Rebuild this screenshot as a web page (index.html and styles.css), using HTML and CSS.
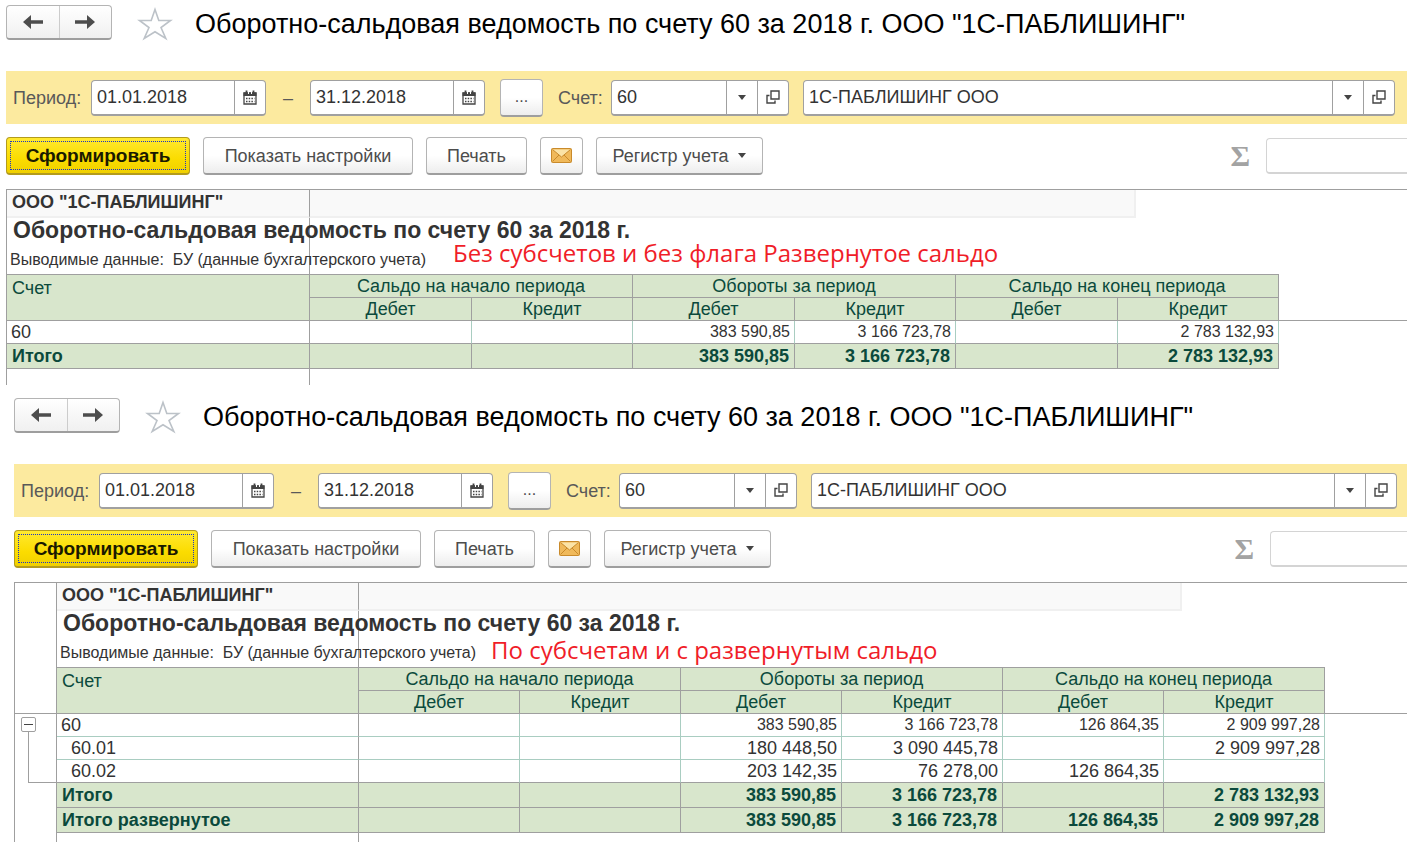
FILE: index.html
```html
<!DOCTYPE html>
<html lang="ru">
<head>
  <meta charset="UTF-8">
  <meta name="viewport" content="width=device-width, initial-scale=1.0">
  <title>Оборотно-сальдовая ведомость по счету 60</title>
  <link rel="stylesheet" href="styles.css">
</head>
<body>
  <!-- Общие иконки -->
  <svg class="sprite" aria-hidden="true">
    <symbol id="i-left" viewBox="0 0 22 16">
      <path d="M1 8L9 1V6.200H21V9.800H9V15Z" fill="#4d4d4d"/>
    </symbol>
    <symbol id="i-right" viewBox="0 0 22 16">
      <path d="M21 8L13 1V6.200H1V9.800H13V15Z" fill="#4d4d4d"/>
    </symbol>
    <symbol id="i-star" viewBox="0 0 36 34">
      <path d="M18 2.500L21.800 13.500H33.500L24 20.500L28.800 31.500L18 24.700L7.200 31.500L12 20.500L2.500 13.500H14.200Z" fill="#fff" stroke="#bcc2c8" stroke-width="1.600"/>
    </symbol>
    <symbol id="i-cal" viewBox="0 0 14 15">
      <path d="M1 3H13V14H1Z" fill="#fff" stroke="#444" stroke-width="1.300"/>
      <path d="M0.500 2.500H13.500V6H0.500Z" fill="#444"/>
      <path d="M3.500 0.500V4M10.500 0.500V4" stroke="#444" stroke-width="1.800"/>
      <path d="M5.500 2V4M8.500 2V4" stroke="#fff" stroke-width="1"/>
      <path d="M3 8.500H11.500M3 11.500H11.500" stroke="#444" stroke-width="1.500" stroke-dasharray="1.500 1.200"/>
    </symbol>
    <symbol id="i-open" viewBox="0 0 14 14">
      <path d="M5 1H13V9H5Z" fill="none" stroke="#444" stroke-width="1.400"/>
      <path d="M3.500 5.500H1V13H9V10.500" fill="none" stroke="#444" stroke-width="1.400"/>
    </symbol>
    <symbol id="i-mail" viewBox="0 0 21 15">
      <rect x="0.500" y="0.500" width="20" height="14" rx="1" fill="#f0b95a" stroke="#c98a2b"/>
      <path d="M1.500 1.500H19.500L10.500 9Z" fill="#fbe3a6"/>
      <path d="M1.500 1.500L10.500 9L19.500 1.500M1.500 13.500L8 7M19.500 13.500L13 7" fill="none" stroke="#c98a2b" stroke-width="1"/>
    </symbol>
  </svg>

  <section class="panel">
    <header class="panel-head">
      <div class="nav">
        <button type="button" aria-label="Назад"><svg width="22" height="16"><use href="#i-left"/></svg></button>
        <button type="button" aria-label="Вперед"><svg width="22" height="16"><use href="#i-right"/></svg></button>
      </div>
      <svg class="star" width="36" height="34"><use href="#i-star"/></svg>
      <h1>Оборотно-сальдовая ведомость по счету 60 за 2018 г. ООО "1С-ПАБЛИШИНГ"</h1>
    </header>

    <div class="filter">
      <label class="label-period" for="from1">Период:</label>
      <div class="field field-date">
        <input id="from1" type="text" value="01.01.2018">
        <button type="button" aria-label="Календарь"><svg width="14" height="15"><use href="#i-cal"/></svg></button>
      </div>
      <label class="dash" for="to1">–</label>
      <div class="field field-date">
        <input id="to1" type="text" value="31.12.2018">
        <button type="button" aria-label="Календарь"><svg width="14" height="15"><use href="#i-cal"/></svg></button>
      </div>
      <button type="button" class="btn btn-dots">...</button>
      <label class="label-account" for="acc1">Счет:</label>
      <div class="field field-account">
        <input id="acc1" type="text" value="60">
        <button type="button" aria-label="Выбрать"><span class="caret"></span></button>
        <button type="button" aria-label="Открыть"><svg width="14" height="14"><use href="#i-open"/></svg></button>
      </div>
      <div class="field field-org">
        <input type="text" value="1С-ПАБЛИШИНГ ООО" aria-label="Организация">
        <button type="button" aria-label="Выбрать"><span class="caret"></span></button>
        <button type="button" aria-label="Открыть"><svg width="14" height="14"><use href="#i-open"/></svg></button>
      </div>
    </div>

    <div class="toolbar">
      <button type="button" class="btn btn-main"><span>Сформировать</span></button>
      <button type="button" class="btn btn-settings">Показать настройки</button>
      <button type="button" class="btn btn-print">Печать</button>
      <button type="button" class="btn btn-mail" aria-label="Отправить по почте"><svg width="21" height="15"><use href="#i-mail"/></svg></button>
      <button type="button" class="btn btn-register">Регистр учета <span class="caret"></span></button>
      <label class="sigma" for="sum1">Σ</label>
      <input class="sum" id="sum1" type="text">
    </div>

    <div class="sheet-wrap">
      <table class="sheet">
        <colgroup>
          <col class="c-account"><col class="c-debit"><col class="c-credit"><col class="c-debit"><col class="c-credit"><col class="c-debit"><col class="c-credit"><col>
        </colgroup>
        <thead>
          <tr class="r-org"><td class="edge">ООО "1С-ПАБЛИШИНГ"</td><td colspan="7"><div class="org-fill"></div></td></tr>
          <tr class="r-title"><td class="edge">Оборотно-сальдовая ведомость по счету 60 за 2018 г.</td><td colspan="7"></td></tr>
          <tr class="r-data"><td class="edge line">Выводимые данные:&nbsp; БУ (данные бухгалтерского учета)</td><td class="line" colspan="6"></td><td></td></tr>
          <tr class="r-head"><th class="edge" rowspan="2">Счет</th><th colspan="2">Сальдо на начало периода</th><th colspan="2">Обороты за период</th><th colspan="2">Сальдо на конец периода</th><td></td></tr>
          <tr class="r-head"><th>Дебет</th><th>Кредит</th><th>Дебет</th><th>Кредит</th><th>Дебет</th><th>Кредит</th><td class="line"></td></tr>
        </thead>
        <tbody>
          <tr class="r-item r-small r-last"><td class="edge">60</td><td></td><td></td><td>383 590,85</td><td>3 166 723,78</td><td></td><td>2 783 132,93</td></tr>
          <tr class="r-total"><td class="edge">Итого</td><td></td><td></td><td>383 590,85</td><td>3 166 723,78</td><td></td><td>2 783 132,93</td></tr>
          <tr class="r-rest"><td class="edge"></td><td colspan="7"></td></tr>
        </tbody>
      </table>
      <p class="note">Без субсчетов и без флага Развернутое сальдо</p>
    </div>
  </section>

  <section class="panel panel-detailed">
    <header class="panel-head">
      <div class="nav">
        <button type="button" aria-label="Назад"><svg width="22" height="16"><use href="#i-left"/></svg></button>
        <button type="button" aria-label="Вперед"><svg width="22" height="16"><use href="#i-right"/></svg></button>
      </div>
      <svg class="star" width="36" height="34"><use href="#i-star"/></svg>
      <h1>Оборотно-сальдовая ведомость по счету 60 за 2018 г. ООО "1С-ПАБЛИШИНГ"</h1>
    </header>

    <div class="filter">
      <label class="label-period" for="from2">Период:</label>
      <div class="field field-date">
        <input id="from2" type="text" value="01.01.2018">
        <button type="button" aria-label="Календарь"><svg width="14" height="15"><use href="#i-cal"/></svg></button>
      </div>
      <label class="dash" for="to2">–</label>
      <div class="field field-date">
        <input id="to2" type="text" value="31.12.2018">
        <button type="button" aria-label="Календарь"><svg width="14" height="15"><use href="#i-cal"/></svg></button>
      </div>
      <button type="button" class="btn btn-dots">...</button>
      <label class="label-account" for="acc2">Счет:</label>
      <div class="field field-account">
        <input id="acc2" type="text" value="60">
        <button type="button" aria-label="Выбрать"><span class="caret"></span></button>
        <button type="button" aria-label="Открыть"><svg width="14" height="14"><use href="#i-open"/></svg></button>
      </div>
      <div class="field field-org">
        <input type="text" value="1С-ПАБЛИШИНГ ООО" aria-label="Организация">
        <button type="button" aria-label="Выбрать"><span class="caret"></span></button>
        <button type="button" aria-label="Открыть"><svg width="14" height="14"><use href="#i-open"/></svg></button>
      </div>
    </div>

    <div class="toolbar">
      <button type="button" class="btn btn-main"><span>Сформировать</span></button>
      <button type="button" class="btn btn-settings">Показать настройки</button>
      <button type="button" class="btn btn-print">Печать</button>
      <button type="button" class="btn btn-mail" aria-label="Отправить по почте"><svg width="21" height="15"><use href="#i-mail"/></svg></button>
      <button type="button" class="btn btn-register">Регистр учета <span class="caret"></span></button>
      <label class="sigma" for="sum2">Σ</label>
      <input class="sum" id="sum2" type="text">
    </div>

    <div class="sheet-wrap">
      <table class="sheet">
        <colgroup>
          <col class="c-outline"><col class="c-account"><col class="c-debit"><col class="c-credit"><col class="c-debit"><col class="c-credit"><col class="c-debit"><col class="c-credit"><col>
        </colgroup>
        <thead>
          <tr class="r-org"><td class="outline line" rowspan="5"></td><td class="edge">ООО "1С-ПАБЛИШИНГ"</td><td colspan="7"><div class="org-fill"></div></td></tr>
          <tr class="r-title"><td class="edge">Оборотно-сальдовая ведомость по счету 60 за 2018 г.</td><td colspan="7"></td></tr>
          <tr class="r-data"><td class="edge line">Выводимые данные:&nbsp; БУ (данные бухгалтерского учета)</td><td class="line" colspan="6"></td><td></td></tr>
          <tr class="r-head"><th class="edge" rowspan="2">Счет</th><th colspan="2">Сальдо на начало периода</th><th colspan="2">Обороты за период</th><th colspan="2">Сальдо на конец периода</th><td></td></tr>
          <tr class="r-head"><th>Дебет</th><th>Кредит</th><th>Дебет</th><th>Кредит</th><th>Дебет</th><th>Кредит</th><td class="line"></td></tr>
        </thead>
        <tbody>
          <tr class="r-item r-small">
            <td class="outline" rowspan="3">
              <div class="group">
                <button type="button" class="collapse" aria-label="Свернуть"></button>
                <div class="bracket"></div>
              </div>
            </td>
            <td class="edge">60</td><td></td><td></td><td>383 590,85</td><td>3 166 723,78</td><td>126 864,35</td><td>2 909 997,28</td>
          </tr>
          <tr class="r-item"><td class="edge sub">60.01</td><td></td><td></td><td>180 448,50</td><td>3 090 445,78</td><td></td><td>2 909 997,28</td></tr>
          <tr class="r-item r-last"><td class="edge sub">60.02</td><td></td><td></td><td>203 142,35</td><td>76 278,00</td><td>126 864,35</td><td></td></tr>
          <tr class="r-total"><td class="outline" rowspan="3"></td><td class="edge">Итого</td><td></td><td></td><td>383 590,85</td><td>3 166 723,78</td><td></td><td>2 783 132,93</td></tr>
          <tr class="r-total"><td class="edge">Итого развернутое</td><td></td><td></td><td>383 590,85</td><td>3 166 723,78</td><td>126 864,35</td><td>2 909 997,28</td></tr>
          <tr class="r-rest"><td class="edge"></td><td colspan="7"></td></tr>
        </tbody>
      </table>
      <p class="note">По субсчетам и с развернутым сальдо</p>
    </div>
  </section>
</body>
</html>
```
FILE: styles.css
```css
* {
  box-sizing: border-box;
}

body {
  margin: 0;
  background: #fff;
  color: #333;
  font-family: "Liberation Sans", Arial, sans-serif;
  font-size: 18px;
  line-height: 22px;
  overflow-x: hidden;
}

button,
input {
  font: inherit;
  color: inherit;
}

.sprite {
  display: none;
}

.panel {
  padding: 5px 0 0 6px;
}

.panel-detailed {
  padding: 13px 0 0 14px;
}

/* Заголовок */
.panel-head {
  display: flex;
  align-items: center;
  height: 35px;
  margin-bottom: 31px;
}

.nav {
  display: flex;
  width: 106px;
  height: 35px;
  border: 1px solid #b4b4b4;
  border-bottom: 2px solid #9e9e9e;
  border-radius: 4px;
  background: linear-gradient(#fff, #f0f0f0);
}

.nav button {
  flex: 1;
  display: flex;
  align-items: center;
  justify-content: center;
  padding: 0;
  border: none;
  background: none;
}

.nav button + button {
  border-left: 1px solid #ccc;
}

.star {
  margin: 2px 22px 0 25px;
}

h1 {
  margin: 0;
  padding-top: 2px;
  color: #000;
  font-size: 27px;
  font-weight: normal;
  line-height: 34px;
  white-space: nowrap;
}

/* Отбор */
.filter {
  display: flex;
  align-items: center;
  height: 53px;
  padding: 0 12px 0 7px;
  background: #fcea9f;
  color: #595959;
}

.panel-detailed .filter {
  padding-right: 10px;
}

.label-period {
  width: 78px;
}

.label-account {
  width: 53px;
  margin-left: 15px;
}

.dash {
  width: 44px;
  text-align: center;
}

.field {
  display: flex;
  height: 36px;
  border: 1px solid #a0a0a0;
  border-bottom-width: 2px;
  border-radius: 4px;
  background: #fff;
  color: #333;
  overflow: hidden;
}

.field input {
  flex: 1;
  min-width: 0;
  padding: 0 5px;
  border: none;
  outline: none;
  background: none;
}

.field button {
  display: flex;
  align-items: center;
  justify-content: center;
  width: 31px;
  padding: 0;
  border: none;
  border-left: 1px solid #a0a0a0;
  background: none;
}

.field-date {
  width: 175px;
}

.field-account {
  width: 178px;
}

.field-org {
  flex: 1;
  margin-left: 14px;
}

.caret {
  border: 4px solid transparent;
  border-top: 5px solid #444;
  border-bottom: none;
}

/* Кнопки */
.btn {
  display: flex;
  align-items: center;
  justify-content: center;
  height: 38px;
  padding: 0;
  border: 1px solid #b4b4b4;
  border-bottom: 2px solid #9e9e9e;
  border-radius: 4px;
  background: linear-gradient(#fff 50%, #ededed);
  color: #4d4d4d;
  white-space: nowrap;
}

.btn-dots {
  width: 43px;
  margin-left: 15px;
  font-size: 16px;
}

.toolbar {
  display: flex;
  align-items: center;
  gap: 13px;
  margin: 13px 0 14px;
}

.btn-main {
  width: 184px;
  padding: 3px;
  border-color: #b39b1c;
  background: linear-gradient(#ffe930, #fbdc00 60%, #f0d000);
  color: #1a1a00;
  font-size: 19px;
  font-weight: bold;
}

.btn-main span {
  display: flex;
  align-items: center;
  justify-content: center;
  width: 100%;
  height: 29px;
  border: 1px dotted #1b34c8;
}

.btn-settings {
  width: 210px;
}

.btn-print {
  width: 101px;
}

.btn-mail {
  width: 43px;
}

.btn-register {
  width: 167px;
  gap: 10px;
}

.sigma {
  margin-left: auto;
  color: #a3a3a3;
  font-family: "Liberation Serif", serif;
  font-size: 30px;
  font-weight: bold;
}

.sum {
  width: 141px;
  height: 36px;
  margin-left: 3px;
  border: 1px solid #d4d4d4;
  border-right: none;
  border-bottom-width: 2px;
  border-radius: 4px 0 0 4px;
  background: #fff;
}

.panel-detailed .sum {
  width: 137px;
}

/* Табличный документ */
.sheet-wrap {
  position: relative;
}

.sheet {
  width: 100%;
  table-layout: fixed;
  border-collapse: separate;
  border-spacing: 0;
  border-top: 1px solid #9f9f9f;
  border-left: 1px solid #9f9f9f;
}

.c-account {
  width: 303px;
}

.c-debit {
  width: 162px;
}

.c-credit {
  width: 161px;
}

.panel-detailed .c-account {
  width: 302px;
}

.panel-detailed .c-debit {
  width: 161px;
}

.c-outline {
  width: 42px;
}

.sheet td,
.sheet th {
  padding: 0 4px;
  line-height: 20px;
  white-space: nowrap;
}

.sheet .edge,
.sheet .outline {
  border-right: 1px solid #9f9f9f;
  text-align: left;
}

.sheet .line {
  border-bottom: 1px solid #9f9f9f;
}

.sheet .outline {
  padding: 0;
  vertical-align: top;
}

.r-org {
  height: 28px;
}

.sheet .r-org td {
  padding: 0;
  vertical-align: top;
}

.sheet .r-org .edge {
  padding: 2px 5px;
  border-bottom: 2px solid #f0f0f0;
  background: #f9f9f9;
  font-weight: bold;
}

.org-fill {
  width: 826px;
  height: 28px;
  border: solid #f0f0f0;
  border-width: 0 2px 2px 0;
  background: #f9f9f9;
}

.panel-detailed .org-fill {
  width: 823px;
}

.r-title {
  height: 28px;
}

.sheet .r-title .edge {
  padding: 0 6px;
  font-size: 23px;
  font-weight: bold;
  line-height: 24px;
  vertical-align: top;
}

.r-data {
  height: 29px;
}

.sheet .r-data .edge {
  padding: 0 3px;
  font-size: 16px;
}

.r-head {
  height: 23px;
}

.r-head th {
  border: solid #9f9f9f;
  border-width: 0 1px 1px 0;
  background: #d8e6cc;
  color: #0b4a3c;
  font-weight: normal;
}

.sheet .r-head .edge {
  padding: 3px 5px 0;
  vertical-align: top;
}

.r-item {
  height: 23px;
}

.r-item td {
  border: solid #a9cdc1;
  border-width: 0 1px 1px 0;
  text-align: right;
}

.r-item .outline {
  border-bottom: none;
}

.r-small td:not(.edge) {
  font-size: 16px;
}

.sheet .sub {
  padding-left: 14px;
}

.r-last td {
  border-bottom-color: #9f9f9f;
}

.r-total {
  height: 25px;
}

.sheet .r-total td:not(.outline) {
  border: solid #9f9f9f;
  border-width: 0 1px 1px 0;
  padding: 0 5px;
  background: #d8e6cc;
  color: #0b4a3c;
  font-weight: bold;
}

.r-total td {
  text-align: right;
}

.r-rest {
  height: 16px;
}

.panel-detailed .r-rest {
  height: 10px;
}

/* Группировка строк */
.group {
  display: flex;
  flex-direction: column;
  padding: 3px 0 0 6px;
}

.collapse {
  display: flex;
  align-items: center;
  width: 15px;
  height: 15px;
  padding: 0 2px;
  border: 1px solid #9f9f9f;
  border-radius: 2px;
  background: #fff;
}

.collapse::before {
  content: "";
  width: 100%;
  height: 1px;
  background: #444;
}

.bracket {
  height: 51px;
  margin-left: 7px;
  border: solid #9f9f9f;
  border-width: 0 0 1px 1px;
}

/* Пояснение поверх таблицы */
.note {
  position: absolute;
  top: 49px;
  left: 447px;
  margin: 0;
  color: #f01d28;
  font-family: "Open Sans", "Noto Sans", sans-serif;
  font-size: 24px;
  line-height: 30px;
  white-space: nowrap;
}

.panel-detailed .note {
  top: 53px;
  left: 477px;
}
```
